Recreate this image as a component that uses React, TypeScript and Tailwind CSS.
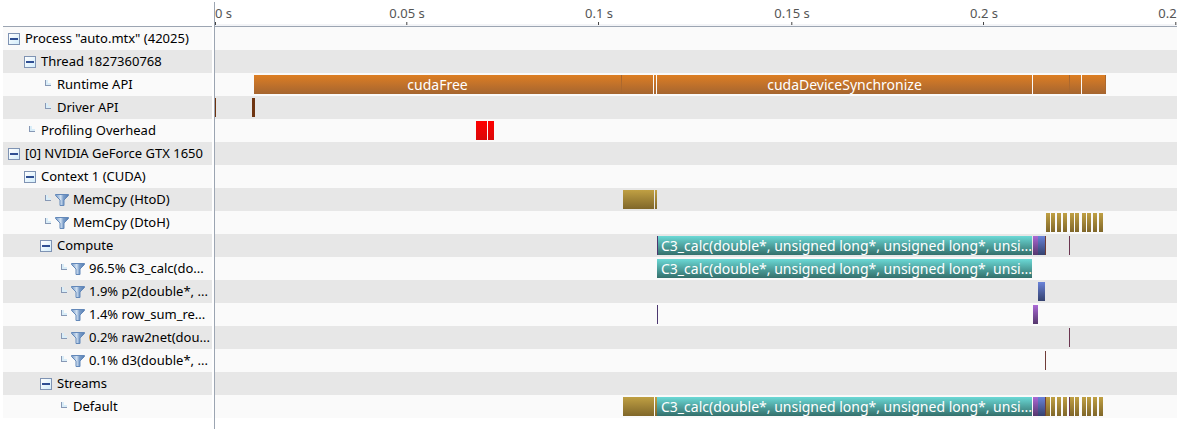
import { useState } from "react";

type Kind = "orange" | "seam" | "brown" | "red" | "gold" | "teal" | "violet" | "blue" | "plum" | "wine" | "rust";

type Span = { at: number; len: number; kind: Kind; label?: string; align?: "left" };

type Row = {
  name: string;
  depth: number;
  group?: boolean;
  filter?: boolean;
  spans?: Span[];
};

const KIND_CLASS: Record<Kind, string> = {
  orange: "bg-linear-to-b from-[#dd7e22] to-[#a5652f]",
  seam: "bg-linear-to-b from-[#a5652f] to-[#a5652f]/40",
  brown: "bg-[#6e3410]",
  red: "bg-linear-to-b from-[#ff0000] to-[#d90808]",
  gold: "bg-linear-to-b from-[#c0a043] to-[#80672a]",
  teal: "bg-linear-to-b from-[#6bd9d6] to-[#34706c]",
  violet: "bg-linear-to-b from-[#ab69d6] to-[#55376d]",
  blue: "bg-linear-to-b from-[#6a83d9] to-[#35426f]",
  plum: "bg-[#4c3870]",
  wine: "bg-[#6b3550]",
  rust: "bg-[#703c38]",
};

// Offsets and lengths are pixels from 0 s at the current zoom level.
const STEP = 192.2;
const TICKS = ["0 s", "0.05 s", "0.1 s", "0.15 s", "0.2 s", "0.25 s"];

const KERNEL = "C3_calc(double*, unsigned long*, unsigned long*, unsi...";

const HTOD: Span[] = [
  { at: 408, len: 31, kind: "gold" },
  { at: 440, len: 2, kind: "gold" },
];

const DTOH: Span[] = [831, 836, 842, 848, 855, 860, 867, 872, 878, 884].map((at) => ({
  at,
  len: 4,
  kind: "gold",
}));

const C3: Span = { at: 442, len: 375, kind: "teal", label: KERNEL, align: "left" };
const ROW_SUM: Span = { at: 818, len: 5, kind: "violet" };
const P2: Span = { at: 823, len: 7, kind: "blue" };
const D3: Span = { at: 830, len: 1, kind: "rust" };
const RAW2NET: Span = { at: 854, len: 1, kind: "wine" };
const ROW_SUM_FIRST: Span = { at: 442, len: 1, kind: "plum" };

const ROWS: Row[] = [
  { name: 'Process "auto.mtx" (42025)', depth: 0, group: true },
  { name: "Thread 1827360768", depth: 1, group: true },
  {
    name: "Runtime API",
    depth: 2,
    spans: [
      { at: 39, len: 367, kind: "orange", label: "cudaFree" },
      { at: 406, len: 32, kind: "orange" },
      { at: 406, len: 1, kind: "seam" },
      { at: 439, len: 2, kind: "orange" },
      { at: 442, len: 375, kind: "orange", label: "cudaDeviceSynchronize" },
      { at: 818, len: 48, kind: "orange" },
      { at: 854, len: 1, kind: "seam" },
      { at: 867, len: 24, kind: "orange" },
      { at: 890, len: 1, kind: "seam" },
    ],
  },
  {
    name: "Driver API",
    depth: 2,
    spans: [
      { at: 0, len: 1, kind: "brown" },
      { at: 37, len: 3, kind: "brown" },
    ],
  },
  {
    name: "Profiling Overhead",
    depth: 1,
    spans: [
      { at: 261, len: 11, kind: "red" },
      { at: 273, len: 6, kind: "red" },
    ],
  },
  { name: "[0] NVIDIA GeForce GTX 1650", depth: 0, group: true },
  { name: "Context 1 (CUDA)", depth: 1, group: true },
  { name: "MemCpy (HtoD)", depth: 2, filter: true, spans: HTOD },
  { name: "MemCpy (DtoH)", depth: 2, filter: true, spans: DTOH },
  { name: "Compute", depth: 2, group: true, spans: [C3, ROW_SUM_FIRST, ROW_SUM, P2, D3, RAW2NET] },
  { name: "96.5% C3_calc(do...", depth: 3, filter: true, spans: [C3] },
  { name: "1.9% p2(double*, ...", depth: 3, filter: true, spans: [P2] },
  { name: "1.4% row_sum_re...", depth: 3, filter: true, spans: [ROW_SUM_FIRST, ROW_SUM] },
  { name: "0.2% raw2net(dou...", depth: 3, filter: true, spans: [RAW2NET] },
  { name: "0.1% d3(double*, ...", depth: 3, filter: true, spans: [D3] },
  { name: "Streams", depth: 2, group: true },
  { name: "Default", depth: 3, spans: [...HTOD, C3, ROW_SUM, P2, D3, ...DTOH, RAW2NET] },
];

const INDENT = ["pl-[5px]", "pl-[21px]", "pl-[37px]", "pl-[53px]"];

function Funnel() {
  return (
    <svg className="ml-[3px] h-3 w-3.5 shrink-0" viewBox="0 0 14 12" aria-hidden="true">
      <defs>
        <linearGradient id="funnel" x1="0" x2="1" y1="0" y2="0">
          <stop offset="0.05" stopColor="#7c9fca" />
          <stop offset="0.4" stopColor="#d3e2f2" />
          <stop offset="0.6" stopColor="#7d9fca" />
          <stop offset="1" stopColor="#557dB2" />
        </linearGradient>
      </defs>
      <path d="M.5 .5h13v1L9 6v5.500H5V6L.5 1.500z" fill="url(#funnel)" stroke="#6388b9" />
    </svg>
  );
}

function Elbow() {
  return (
    <svg className="h-3 w-3 shrink-0" viewBox="0 0 12 12" aria-hidden="true">
      <path d="M6 1h2v3h3v2H6z" fill="#d9edf8" />
      <path d="M5.500 1v6M5 6.500h6" fill="none" stroke="#8798b5" />
    </svg>
  );
}

function Toggle({ name, open, onToggle }: { name: string; open: boolean; onToggle: () => void }) {
  return (
    <button
      type="button"
      aria-label={name}
      aria-expanded={open}
      onClick={onToggle}
      className="flex size-3 shrink-0 items-center justify-center border border-[#7f93b3] bg-linear-to-br from-white to-[#d3edfb]"
    >
      <svg className="size-2" viewBox="0 0 8 8" aria-hidden="true">
        <path d={open ? "M0 3h8v2H0z" : "M0 3h3V0h2v3h3v2H5v3H3V5H0z"} fill="#2f4f93" />
      </svg>
    </button>
  );
}

function Bar({ span }: { span: Span }) {
  return (
    <div
      className={`absolute top-0.5 h-[19px] overflow-hidden whitespace-nowrap text-sm leading-[19px] text-white ${
        span.align === "left" ? "pl-1 text-left" : "text-center"
      } ${KIND_CLASS[span.kind]}`}
      style={{ left: span.at, width: span.len }}
    >
      {span.label}
    </div>
  );
}

export default function App() {
  const [closed, setClosed] = useState<number[]>([]);

  const toggle = (index: number) =>
    setClosed((now) => (now.includes(index) ? now.filter((i) => i !== index) : [...now, index]));

  let hiddenBelow = Infinity;
  const visible = ROWS.map((row, index) => ({ row, index })).filter(({ row, index }) => {
    if (row.depth > hiddenBelow) return false;
    hiddenBelow = closed.includes(index) ? row.depth : Infinity;
    return true;
  });

  return (
    <main className="flex min-h-screen bg-white pt-0.5 font-['Noto_Sans','Open_Sans',sans-serif] text-[13px] text-black">
      <section aria-label="Activities" className="ml-[3px] w-[209px] shrink-0">
        <div className="h-[25px] border-b border-[#9ca5b2]" />
        <ul>
          {visible.map(({ row, index }) => (
            <li
              key={row.name}
              className={`flex h-[23px] items-center odd:bg-[#fafafa] even:bg-[#e7e7e7] ${INDENT[row.depth]}`}
            >
              {row.group ? (
                <Toggle name={row.name} open={!closed.includes(index)} onToggle={() => toggle(index)} />
              ) : (
                <Elbow />
              )}
              {row.filter && <Funnel />}
              <span className={`whitespace-nowrap leading-[23px] ${row.filter ? "pl-1" : "pl-[5px]"}`}>{row.name}</span>
            </li>
          ))}
        </ul>
      </section>

      <section aria-label="Timeline" className="ml-0.5 min-w-0 flex-1 overflow-hidden border-l border-[#9ca5b2]">
        <div className="relative h-[25px] border-b border-[#9ca5b2] text-[#555] shadow-[inset_0_-2px_0_#f3f4f7]">
          {TICKS.map((tick, i) => (
            <div
              key={tick}
              className={`absolute top-[3px] flex flex-col ${i ? "-translate-x-1/2 items-center" : "items-start"}`}
              style={{ left: Math.round(i * STEP) }}
            >
              <span className="whitespace-nowrap leading-[17px]">{tick}</span>
              <span className="h-[3px] w-px bg-[#444]" />
            </div>
          ))}
        </div>
        {visible.map(({ row }) => (
          <div key={row.name} className="relative h-[23px] even:bg-[#fafafa] odd:bg-[#e7e7e7]">
            {row.spans?.map((span, i) => (
              <Bar key={i} span={span} />
            ))}
          </div>
        ))}
      </section>
    </main>
  );
}
